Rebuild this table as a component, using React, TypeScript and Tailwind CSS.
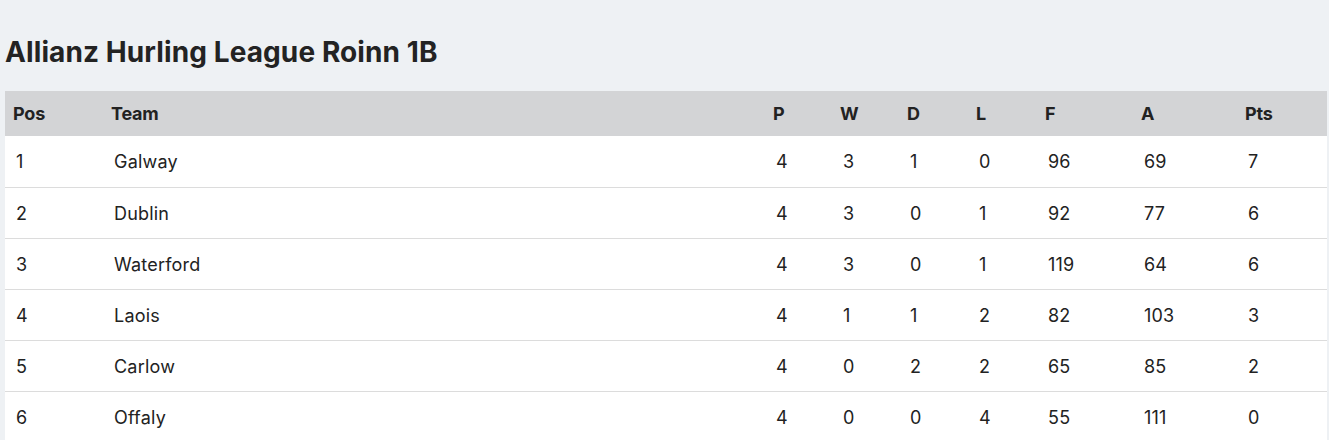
const rows = [
  { pos: 1, team: "Galway", p: 4, w: 3, d: 1, l: 0, f: 96, a: 69, pts: 7 },
  { pos: 2, team: "Dublin", p: 4, w: 3, d: 0, l: 1, f: 92, a: 77, pts: 6 },
  { pos: 3, team: "Waterford", p: 4, w: 3, d: 0, l: 1, f: 119, a: 64, pts: 6 },
  { pos: 4, team: "Laois", p: 4, w: 1, d: 1, l: 2, f: 82, a: 103, pts: 3 },
  { pos: 5, team: "Carlow", p: 4, w: 0, d: 2, l: 2, f: 65, a: 85, pts: 2 },
  { pos: 6, team: "Offaly", p: 4, w: 0, d: 0, l: 4, f: 55, a: 111, pts: 0 },
];

const widths = ["w-[98px]", "w-[662px]", "w-[67px]", "w-[67px]", "w-[69px]", "w-[69px]", "w-[96px]", "w-[104px]", "w-[90px]"];
const headers = ["Pos", "Team", "P", "W", "D", "L", "F", "A", "Pts"];

export default function App() {
  return (
    <div className="min-h-[440px] bg-[#eef1f4] pl-[5px] pr-[2px] pt-[36px] font-['Inter','Liberation_Sans',sans-serif] text-[#222]">
      <h2 className="text-[28px] font-bold leading-[33px] tracking-[0.1px] text-[#232323]">Allianz Hurling League Roinn 1B</h2>
      <table className="mt-[22px] w-[1322px] table-fixed border-collapse">
        <thead>
          <tr className="h-[45px] bg-[#d3d4d6]">
            {headers.map((h, i) => (
              <th key={h} className={`${widths[i]} pl-2 text-left text-[18px] font-bold tracking-[-0.2px]`}>
                {h}
              </th>
            ))}
          </tr>
        </thead>
        <tbody className="bg-white">
          {rows.map((r) => (
            <tr key={r.pos} className="h-[51px] border-b border-[#dcdcdc] text-[18px] tracking-[0.2px]">
              {[r.pos, r.team, r.p, r.w, r.d, r.l, r.f, r.a, r.pts].map((v, i) => (
                <td key={i} className="pl-[11px] pt-[1px] text-left">
                  {v}
                </td>
              ))}
            </tr>
          ))}
        </tbody>
      </table>
    </div>
  );
}
